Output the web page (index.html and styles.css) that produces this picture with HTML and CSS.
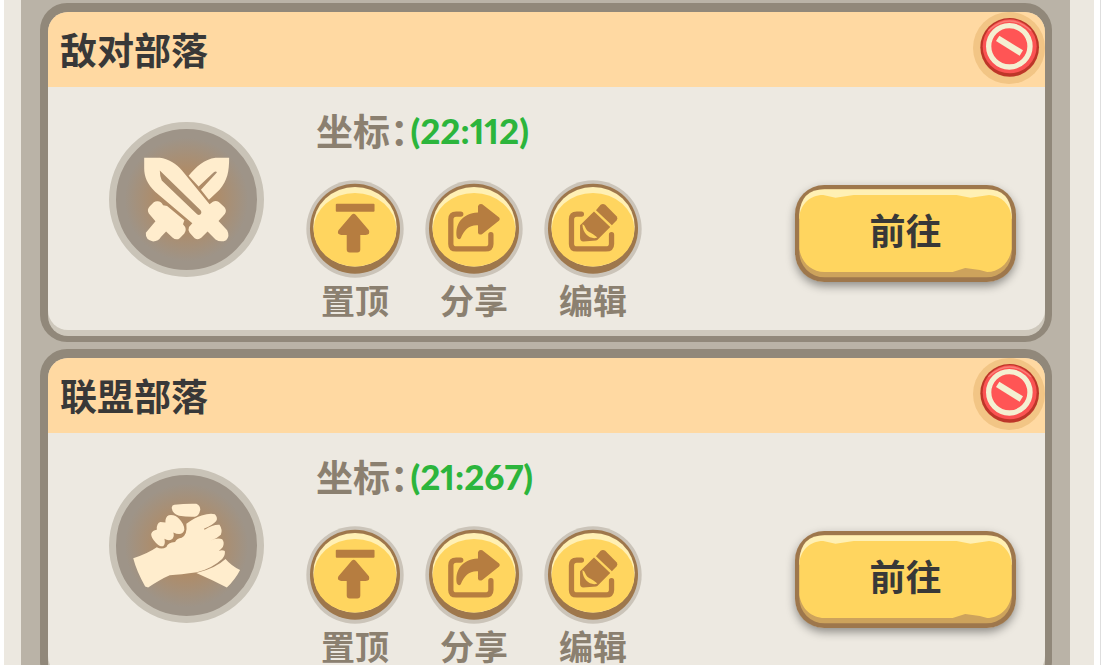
FILE: index.html
```html
<!DOCTYPE html>
<html lang="zh-CN">
<head>
  <meta charset="UTF-8" />
  <meta name="viewport" content="width=device-width, initial-scale=1.0"/>
  <title>部落坐标</title>
  <link rel="stylesheet" href="styles.css">
</head>
<body>
  <!-- shared icons -->
  <svg class="sprite" aria-hidden="true">
    <symbol id="disc" viewBox="0 0 296 296">
      <circle cx="148" cy="148" r="147" fill="#cbc4b9"/>
      <circle cx="148" cy="147" r="136" fill="#9e774c"/>
      <ellipse cx="148" cy="141" rx="126" ry="120" fill="#fff0b4"/>
      <ellipse cx="148" cy="150" rx="125" ry="111" fill="#ffd55f"/>
    </symbol>
    <symbol id="icon-top" viewBox="18 240 296 296">
      <rect x="108" y="312" width="117" height="24" rx="3"/>
      <path d="M156 345Q162 339 168 345L208 392Q213 406 198 406H182V450Q182 459 173 459H150Q141 459 141 450V406H124Q110 404 116 392Z"/>
    </symbol>
    <symbol id="icon-share" viewBox="374 237 296 296">
      <path class="line" d="M482 340H468Q452 340 452 356V430Q452 445 468 445H556Q573 445 573 430V402"/>
      <path d="M534 316Q537 307 547 310L598 350Q602 355 598 359L546 401Q536 404 534 396V374C508 372 492 388 482 413Q476 420 470 410C464 372 484 338 534 335Z"/>
    </symbol>
    <symbol id="icon-edit" viewBox="729 237 296 296">
      <path class="line" d="M842 340H828Q812 340 812 356V430Q812 445 828 445H916Q933 445 933 430V402"/>
      <path d="M880 332L929 379L890 418L886 420L848 423Q838 422 838 412V374Z"/>
      <path d="M886 328L900 312Q907 307 914 312L949 347Q953 353 948 359L934 374Z"/>
      <path d="M845 371C854 374 853 384 860 390C868 397 878 398 890 411C872 418 846 404 845 371Z" fill="#ffd55f"/>
    </symbol>
    <symbol id="icon-ban" viewBox="100 36 216 216">
      <circle cx="208" cy="144" r="108" fill="#f2c585"/>
      <circle cx="210" cy="142" r="88" fill="#bd3629"/>
      <circle cx="210" cy="139" r="81" fill="#fb5353"/>
      <path d="M146 92Q210 34 274 92" fill="none" stroke="#f98078" stroke-width="4"/>
      <circle cx="209" cy="139" r="62" fill="#ff5555" stroke="#f4f0d2" stroke-width="16"/>
      <path d="M174 115L245 159" fill="none" stroke="#f4f0d2" stroke-width="19"/>
    </symbol>
    <symbol id="go-face" viewBox="43 44 666 291" preserveAspectRatio="none">
      <rect x="43" y="44" width="666" height="291" rx="88" fill="#9e774c"/>
      <rect x="56" y="57" width="640" height="264" rx="76" fill="#cda35c"/>
      <path d="M56 145V133Q60 57 132 57H620Q692 57 696 133V145Z" fill="#fff0b4"/>
      <path d="M56 140C60 104 86 74 128 74L165 82L220 74H530L572 82L628 74C666 76 692 104 696 140V236C690 276 660 305 622 305L600 299L556 293L518 305H132C92 305 62 276 56 236Z" fill="#ffd55f"/>
    </symbol>
  </svg>

  <main class="panel">
    <div class="list">
      <article class="card">
        <div class="card-inner">
          <header class="card-header">
            <h2>敌对部落</h2>
            <button class="close" aria-label="删除"><svg><use href="#icon-ban"/></svg></button>
          </header>
          <div class="card-body">
            <div class="emblem">
              <svg viewBox="26 36 465 467">
                <path d="M387 144H346C312 148 287 172 265 198L295 230L340 188Q348 182 350 188L302 240L326 270L358 240C382 212 387 186 387 144Z"/>
                <path d="M172 275Q182 275 188 287L200 289L252 332L248 344Q262 358 252 372L238 386Q228 394 216 384L197 366L182 382Q174 396 158 396Q134 392 136 370L165 335L145 312Q138 300 148 290L160 278Q166 274 172 275Z"/>
                <path d="M131 144H178C204 147 228 162 245 182L328 284L338 276Q347 271 356 277L373 293Q381 304 374 313L355 334L381 362Q390 380 378 392Q362 400 346 390L322 366L303 385Q293 393 283 386L268 370Q262 360 266 352L276 341L164 246C140 222 131 200 131 175Z"/>
                <path class="groove" d="M178 182L301 302Q306 309 300 315Q293 318 288 312L184 212Q178 198 178 182Z"/>
              </svg>
            </div>
            <div class="info">
              <p class="coord"><span class="coord-label">坐标：</span><span class="coord-value">(22:112)</span></p>
              <div class="actions">
                <button class="action"><svg><use href="#disc"/><use href="#icon-top"/></svg><span>置顶</span></button>
                <button class="action"><svg><use href="#disc"/><use href="#icon-share"/></svg><span>分享</span></button>
                <button class="action"><svg><use href="#disc"/><use href="#icon-edit"/></svg><span>编辑</span></button>
              </div>
            </div>
            <button class="go"><svg><use href="#go-face"/></svg><span>前往</span></button>
          </div>
        </div>
      </article>

      <article class="card">
        <div class="card-inner">
          <header class="card-header">
            <h2>联盟部落</h2>
            <button class="close" aria-label="删除"><svg><use href="#icon-ban"/></svg></button>
          </header>
          <div class="card-body">
            <div class="emblem">
              <svg viewBox="26 39 465 467">
                <path d="M222 150Q256 146 288 147Q300 152 300 165Q296 184 284 186Q260 187 236 183Q215 176 214 158Q215 150 222 150Z"/>
                <path d="M205 181Q225 178 236 192Q252 208 252 225Q248 238 236 238Q228 238 219 233Q224 250 210 256Q200 258 192 252Q196 268 188 275Q176 276 166 264Q152 250 152 238Q156 226 169 225Q168 205 180 202Q188 202 195 203Q194 186 205 181Z"/>
                <path d="M98 311Q140 298 169 278Q184 286 198 277Q202 264 224 262Q230 250 244 249Q262 240 258 207Q284 188 304 182Q328 174 344 178Q354 188 348 199Q340 210 311 222L313 225Q340 208 358 210Q368 225 362 240Q350 252 331 258Q352 248 366 254Q374 264 368 277Q358 290 341 295Q362 283 374 289Q376 302 366 313Q335 342 290 353Q240 360 208 362Q180 374 143 399L134 396Q108 350 98 311Z"/>
                <path d="M288 355Q345 342 376 313Q395 335 420 346Q405 375 380 399Q335 375 288 355Z"/>
              </svg>
            </div>
            <div class="info">
              <p class="coord"><span class="coord-label">坐标：</span><span class="coord-value">(21:267)</span></p>
              <div class="actions">
                <button class="action"><svg><use href="#disc"/><use href="#icon-top"/></svg><span>置顶</span></button>
                <button class="action"><svg><use href="#disc"/><use href="#icon-share"/></svg><span>分享</span></button>
                <button class="action"><svg><use href="#disc"/><use href="#icon-edit"/></svg><span>编辑</span></button>
              </div>
            </div>
            <button class="go"><svg><use href="#go-face"/></svg><span>前往</span></button>
          </div>
        </div>
      </article>
    </div>
  </main>
</body>
</html>
```
FILE: styles.css
```css
* {
  box-sizing: border-box;
  margin: 0;
  padding: 0;
}
body {
  height: 100vh;
  overflow: hidden;
  padding: 0 6px 0 4px;
  border-right: 1px solid #dedede;
  background: #fff;
  color: #383838;
  font-family: Lato, "Noto Sans CJK SC", sans-serif;
  font-weight: bold;
}
button {
  border: none;
  background: none;
  color: inherit;
  font: inherit;
  cursor: pointer;
}
.sprite {
  display: none;
}

.panel {
  padding: 0 24px 0 17px;
  background: #ece8e0;
}
.list {
  display: flex;
  flex-direction: column;
  gap: 7px;
  min-height: 100vh;
  padding: 3px 18px 7px 19px;
  background: #bab3a7;
}

.card {
  border: solid #91887a;
  border-width: 9px 7px 6px 8px;
  border-radius: 27px;
  background: #91887a;
}
.card-inner {
  overflow: hidden;
  padding-bottom: 6px; /* lower lip */
  border-radius: 20px;
  background: #cec8bc;
}
.card-header {
  display: flex;
  align-items: flex-start;
  justify-content: space-between;
  height: 75px;
  padding-left: 12px;
  background: #ffd9a2;
}
.card-header h2 {
  font-size: 37px;
  line-height: 78px;
}
.close svg {
  display: block;
  width: 72px;
  height: 72px;
}

.card-body {
  display: flex;
  align-items: flex-start;
  padding: 22px 29px 12px 61px;
  border-radius: 0 0 20px 20px;
  background: #ede9e1;
}
.emblem {
  width: 155px;
  height: 155px;
  margin-top: 13px;
  border: 7px solid #c9c3b7;
  border-radius: 50%;
  background: radial-gradient(circle, #b38a60 0%, #ae8c69 30%, #9e9488 62%);
}
.emblem svg {
  display: block;
  width: 155px;
  height: 155px;
  margin: -7px;
  fill: #ffedcd;
}
.emblem .groove {
  fill: #ab8c6a;
}

.info {
  flex: 1;
  margin-left: 42px;
}
.coord {
  display: flex;
  gap: 2px;
  padding-left: 10px;
  line-height: 42px;
}
.coord-label {
  color: #8b8070;
  font-family: "Noto Sans CJK SC", sans-serif;
  font-size: 37px;
  font-feature-settings: "halt";
}
.coord-value {
  color: #2cb53c;
  font-size: 35px;
  font-weight: 900;
  font-variant-numeric: proportional-nums;
}
.actions {
  display: flex;
  gap: 21px;
  margin-top: 29px;
}
.action svg {
  display: block;
  width: 98px;
  height: 98px;
  fill: #b67d40;
}
.line {
  fill: none;
  stroke: #b67d40;
  stroke-width: 16;
  stroke-linecap: round;
}
.action span {
  display: block;
  margin-top: 6px;
  color: #8b8070;
  font-size: 34px;
  line-height: 34px;
}

.go {
  position: relative;
  width: 221px;
  height: 97px;
  margin-top: 76px;
  padding-bottom: 6px;
  border-radius: 30px;
  box-shadow: 0 4px 10px rgba(0, 0, 0, 0.4);
  font-size: 36px;
  line-height: 40px;
}
.go svg {
  position: absolute;
  top: 0;
  left: 0;
  width: 100%;
  height: 100%;
}
.go span {
  position: relative;
}
```
